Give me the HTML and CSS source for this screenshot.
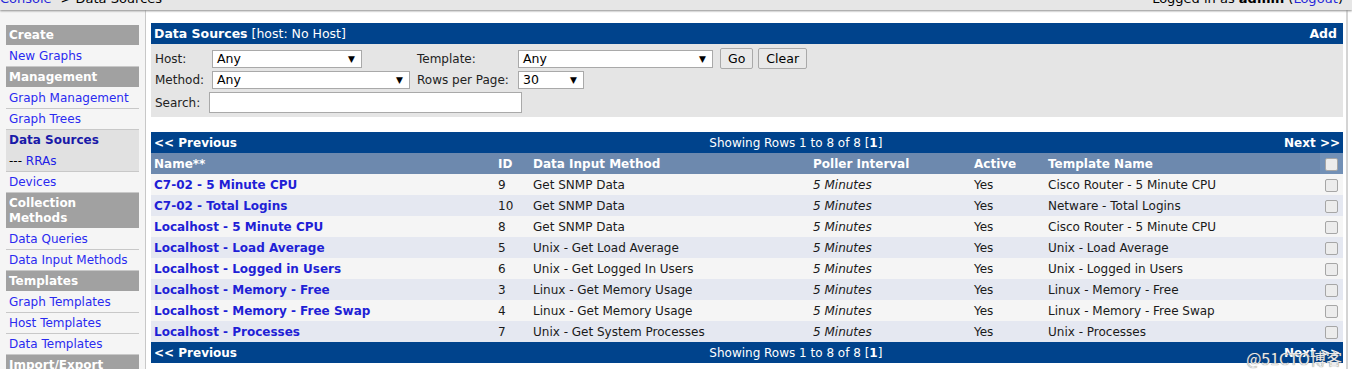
FILE: index.html
```html
<!DOCTYPE html>
<html lang="en">
<head>
    <meta charset="UTF-8">
    <title>Console -> Data Sources</title>
    <link rel="stylesheet" href="styles.css">
</head>
<body>
    <div class="topbar">
        <div class="crumbs"><a href="#">Console</a> -&gt; Data Sources</div>
        <div class="login">Logged in as <strong>admin</strong> (<a href="#">Logout</a>)</div>
    </div>

    <div class="page">
        <div class="sidebar">
            <div class="menu-head">Create</div>
            <a class="menu-item" href="#">New Graphs</a>
            <div class="menu-head">Management</div>
            <a class="menu-item" href="#">Graph Management</a>
            <a class="menu-item" href="#">Graph Trees</a>
            <div class="menu-selected">
                <a class="menu-item current" href="#">Data Sources</a>
                <div class="menu-item sub">--- <a href="#">RRAs</a></div>
            </div>
            <a class="menu-item" href="#">Devices</a>
            <div class="menu-head">Collection Methods</div>
            <a class="menu-item" href="#">Data Queries</a>
            <a class="menu-item" href="#">Data Input Methods</a>
            <div class="menu-head">Templates</div>
            <a class="menu-item" href="#">Graph Templates</a>
            <a class="menu-item" href="#">Host Templates</a>
            <a class="menu-item" href="#">Data Templates</a>
            <div class="menu-head">Import/Export</div>
        </div>

        <div class="main">
            <div class="box-head">
                <div><strong>Data Sources</strong> [host: No Host]</div>
                <a href="#" class="add">Add</a>
            </div>
            <div class="filter">
                <div class="filter-grid">
                    <label>Host:</label>
                    <div class="select w150">Any</div>
                    <label>Template:</label>
                    <div class="select w195">Any</div>
                    <div class="buttons">
                        <button class="btn">Go</button>
                        <button class="btn">Clear</button>
                    </div>
                    <label>Method:</label>
                    <div class="select w198">Any</div>
                    <label>Rows per Page:</label>
                    <div class="select w66">30</div>
                    <div></div>
                </div>
                <div class="search-row">
                    <label>Search:</label>
                    <div class="search-input"></div>
                </div>
            </div>

            <table class="list">
                <colgroup>
                    <col style="width:344px">
                    <col style="width:35px">
                    <col style="width:280px">
                    <col style="width:161px">
                    <col style="width:74px">
                    <col>
                    <col style="width:23px">
                </colgroup>
                <tr class="nav">
                    <td colspan="7">
                        <table class="nav-table">
                            <tr>
                                <td class="prev">&lt;&lt; Previous</td>
                                <td class="showing">Showing Rows 1 to 8 of 8 [<strong>1</strong>]</td>
                                <td class="next">Next &gt;&gt;</td>
                            </tr>
                        </table>
                    </td>
                </tr>
                <tr class="cols">
                    <td>Name**</td>
                    <td>ID</td>
                    <td>Data Input Method</td>
                    <td>Poller Interval</td>
                    <td>Active</td>
                    <td>Template Name</td>
                    <td class="chk-cell head-chk"><span class="chk"></span></td>
                </tr>
                <tbody id="rows"></tbody>
                <tr class="nav">
                    <td colspan="7">
                        <table class="nav-table">
                            <tr>
                                <td class="prev">&lt;&lt; Previous</td>
                                <td class="showing">Showing Rows 1 to 8 of 8 [<strong>1</strong>]</td>
                                <td class="next">Next &gt;&gt;</td>
                            </tr>
                        </table>
                    </td>
                </tr>
            </table>
            <div class="watermark">@51CTO博客</div>
        </div>
    </div>

    <script>
        const sources = [
            ['C7-02 - 5 Minute CPU', 9, 'Get SNMP Data', 'Cisco Router - 5 Minute CPU'],
            ['C7-02 - Total Logins', 10, 'Get SNMP Data', 'Netware - Total Logins'],
            ['Localhost - 5 Minute CPU', 8, 'Get SNMP Data', 'Cisco Router - 5 Minute CPU'],
            ['Localhost - Load Average', 5, 'Unix - Get Load Average', 'Unix - Load Average'],
            ['Localhost - Logged in Users', 6, 'Unix - Get Logged In Users', 'Unix - Logged in Users'],
            ['Localhost - Memory - Free', 3, 'Linux - Get Memory Usage', 'Linux - Memory - Free'],
            ['Localhost - Memory - Free Swap', 4, 'Linux - Get Memory Usage', 'Linux - Memory - Free Swap'],
            ['Localhost - Processes', 7, 'Unix - Get System Processes', 'Unix - Processes']
        ];

        const tbody = document.getElementById('rows');
        sources.forEach((s, i) => {
            const row = document.createElement('tr');
            row.className = i % 2 === 0 ? 'row-light' : 'row-dark';
            row.innerHTML = `
                <td><a href="#" class="ds-name">${s[0]}</a></td>
                <td>${s[1]}</td>
                <td>${s[2]}</td>
                <td class="interval">5 Minutes</td>
                <td>Yes</td>
                <td>${s[3]}</td>
                <td class="chk-cell"><span class="chk"></span></td>
            `;
            tbody.appendChild(row);
        });
    </script>
</body>
</html>
```

FILE: styles.css
```css
* {
    margin: 0;
    padding: 0;
    box-sizing: border-box;
}

body {
    font-family: "DejaVu Sans", Verdana, sans-serif;
    font-size: 12px;
    color: #000;
    background: #fff;
    width: 1352px;
    height: 369px;
    overflow: hidden;
}

a {
    color: #2121e6;
    text-decoration: none;
}

.topbar {
    height: 10px;
    background: #e6e6e6;
    display: flex;
    justify-content: space-between;
    overflow: hidden;
    box-shadow: 0 1px 2px #8c8c8c;
    position: relative;
    z-index: 1;
}

.crumbs {
    margin-top: -9px;
    font-size: 13px;
    line-height: 15px;
}

.login {
    margin-top: -9px;
    margin-right: 9px;
    font-size: 13px;
    line-height: 15px;
}

.login a,
.crumbs a {
    color: #2626d9;
}

.page {
    display: flex;
    height: 359px;
    margin-right: 4px;
}

.sidebar {
    width: 146px;
    flex: none;
    background: #f5f5f5;
    border-right: 1px solid #c8c8c8;
    padding: 15px 6px 0 6px;
}

.menu-head {
    background: #a1a1a1;
    color: #fff;
    font-weight: bold;
    padding: 3px 3px 2px;
    line-height: 15px;
    border-bottom: 1px solid #f5f5f5;
}

.menu-item {
    display: block;
    height: 21px;
    line-height: 20px;
    padding-left: 3px;
    border-bottom: 1px solid #c8c8c8;
    color: #2a2af0;
}

.menu-selected {
    background: #e1e1e1;
    border-top: 1px solid #c8c8c8;
    margin-top: -1px;
}

.menu-item.current {
    font-weight: bold;
    color: #1a1aa8;
    border-bottom: none;
}

.menu-item.sub {
    color: #000;
}

.main {
    flex: 1;
    padding: 13px 3px 0 5px;
    border-right: 2px solid #d4d4d4;
    position: relative;
}

.box-head {
    background: #00438c;
    color: #fff;
    height: 21px;
    line-height: 21px;
    padding: 0 6px 0 3px;
    display: flex;
    justify-content: space-between;
    font-size: 12.5px;
}

.box-head .add {
    color: #fff;
    font-weight: bold;
}

.filter {
    background: #e5e5e5;
    height: 73px;
    padding: 4px 4px 0;
}

.filter-grid {
    display: grid;
    grid-template-columns: 57px 205px 101px 202px auto;
    row-gap: 2px;
    align-items: center;
}

.filter label {
    color: #222;
}

.select {
    height: 18px;
    line-height: 16px;
    background: #fff;
    border: 1px solid #a9a9a9;
    padding-left: 4px;
    position: relative;
    font-size: 12.5px;
}

.select::after {
    content: "▼";
    position: absolute;
    right: 6px;
    top: 0;
    font-size: 9px;
}

.w150 { width: 150px; }
.w195 { width: 195px; }
.w198 { width: 198px; }
.w66 { width: 66px; }

.buttons {
    display: flex;
    gap: 5px;
}

.btn {
    font-family: "DejaVu Sans", Verdana, sans-serif;
    font-size: 12.5px;
    height: 21px;
    padding: 0 7px;
    background: #e9e9e9;
    border: 1px solid #a9a9a9;
    border-radius: 2px;
    color: #000;
}

.search-row {
    display: flex;
    align-items: center;
    gap: 9px;
    margin-top: 3px;
}

.search-input {
    width: 313px;
    height: 21px;
    background: #fff;
    border: 1px solid #a9a9a9;
}

.list {
    width: 100%;
    border-collapse: collapse;
    table-layout: fixed;
    margin-top: 15px;
}

.list td {
    height: 21px;
    padding: 0 3px;
    white-space: nowrap;
    color: #1a1a1a;
}

.nav td {
    padding: 0;
}

.nav-table {
    width: 100%;
    border-collapse: collapse;
    background: #00438c;
}

.nav-table td {
    color: #fff;
    height: 21px;
    padding: 0 3px;
}

.prev {
    font-weight: bold;
    text-align: left;
}

.showing {
    text-align: center;
}

.next {
    font-weight: bold;
    text-align: right;
}

.cols td {
    background: #6d89ae;
    color: #fff;
    font-weight: bold;
}

.cols .head-chk {
    background: #7290b6;
}

.row-light td {
    background: #f5f5f5;
}

.row-dark td {
    background: #e5e8f1;
}

.ds-name {
    font-weight: bold;
    color: #1f1fd6;
}

.interval {
    font-style: italic;
}

.chk-cell {
    text-align: center;
}

.chk {
    display: inline-block;
    width: 13px;
    height: 13px;
    border: 1px solid #a6a6a6;
    border-radius: 2px;
    background: #ececec;
    vertical-align: middle;
}

.watermark {
    position: absolute;
    right: 4px;
    bottom: -1px;
    font-family: "Noto Sans CJK SC", sans-serif;
    font-size: 16px;
    color: #e8e8e8;
    text-shadow: 0 0 1px #555;
}
```
